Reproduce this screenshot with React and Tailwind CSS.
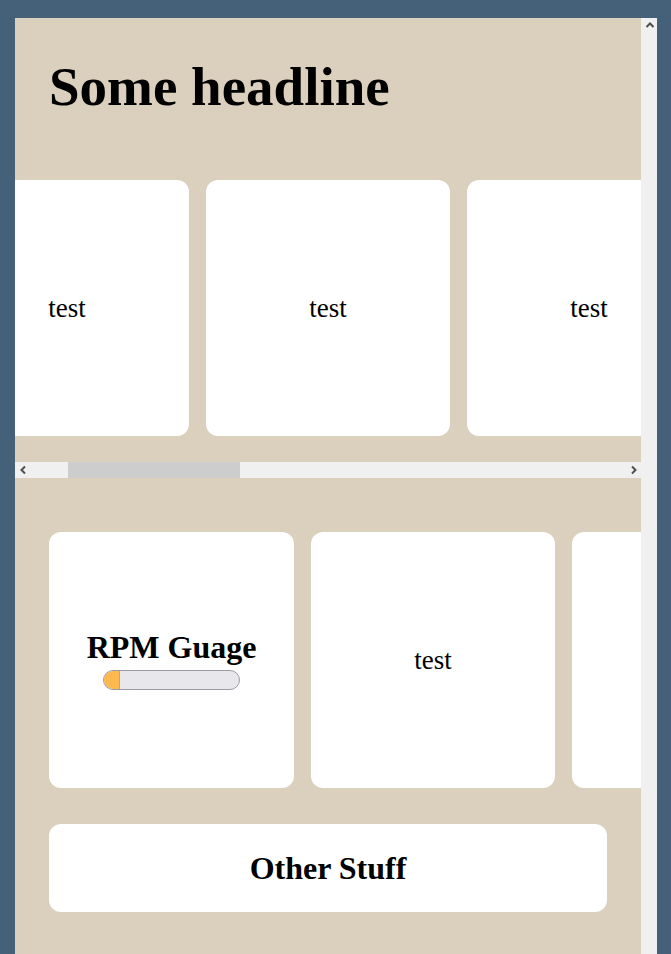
import { useEffect, useRef } from "react";

const serif = "font-['Liberation_Serif','Times_New_Roman',serif]";

const Card = ({ children, wide }) => (
  <div
    className={`${wide ? "w-[245px]" : "w-[244px]"} h-[256px] shrink-0 rounded-xl bg-white flex flex-col items-center justify-center`}
  >
    {children}
  </div>
);

const Gauge = ({ value }) => (
  <div className="w-[137px] h-[20px] rounded-full border border-[#9b9ba5] bg-[#e8e7ec] overflow-hidden">
    <div
      className="h-full bg-[#fdb94d] border-r border-[#e2a23f]"
      style={{ width: `${value}%` }}
    />
  </div>
);

// little chevrons for the drawn scrollbar buttons
const Chevron = ({ dir }) => {
  const points = {
    left: "6,1.5 2.5,5 6,8.5",
    right: "3,1.5 6.5,5 3,8.5",
    up: "1.5,6 5,2.5 8.5,6",
  }[dir];
  return (
    <svg width="9" height="10" viewBox="0 0 9 10">
      <polyline
        points={points}
        fill="none"
        stroke="#4f4f4f"
        strokeWidth="2"
        strokeLinecap="butt"
        strokeLinejoin="miter"
      />
    </svg>
  );
};

const HScrollbar = () => (
  <div className="h-[16px] bg-[#f0f0f0] flex">
    <div className="w-[16px] flex items-center justify-center">
      <Chevron dir="left" />
    </div>
    <div className="flex-1 flex">
      <div className="ml-[37px] w-[172px] bg-[#cdcdcd]" />
    </div>
    <div className="w-[16px] flex items-center justify-center">
      <Chevron dir="right" />
    </div>
  </div>
);

export default function App() {
  const scroller = useRef(null);

  // the top row is shown part-way scrolled
  useEffect(() => {
    if (scroller.current) scroller.current.scrollLeft = 134;
  }, []);

  const topCards = Array.from({ length: 8 }, (_, i) => i);

  return (
    <div className={`h-screen overflow-hidden bg-[#446179] pl-[15px] pt-[18px] ${serif} text-black`}>
      <div className="w-[642px] h-[1000px] bg-[#dbd0bd] flex">
        <div className="w-[626px] overflow-hidden">
          {/* Headline */}
          <div className="pt-[38px] pl-[34px]">
            <h1 className="text-[55px] leading-[61px] font-bold">Some headline</h1>
          </div>

          {/* Scrolling row */}
          <div className="mt-[36px]">
            <div
              ref={scroller}
              className="overflow-x-auto overflow-y-hidden [scrollbar-width:none]"
            >
              <div className="flex gap-[17px] w-max pl-[64px] pr-[26px] pt-[27px] pb-[26px]">
                {topCards.map((i) => (
                  <Card key={i}>
                    <span className="text-[27px] leading-[31px]">test</span>
                  </Card>
                ))}
              </div>
            </div>
            <HScrollbar />
          </div>

          {/* Second row */}
          <div className="mt-[54px] flex gap-[17px] px-[34px] w-max">
            <Card wide>
              <h2 className="text-[32px] leading-[37px] font-bold">RPM Guage</h2>
              <div className="mt-[4px] mb-[2px]">
                <Gauge value={12} />
              </div>
            </Card>
            <Card>
              <span className="text-[27px] leading-[31px]">test</span>
            </Card>
            <Card>
              <span className="text-[27px] leading-[31px]">test</span>
            </Card>
          </div>

          {/* Other stuff */}
          <div className="mt-[36px] mx-[34px] h-[88px] rounded-xl bg-white flex items-center justify-center">
            <h2 className="text-[32px] leading-[37px] font-bold">Other Stuff</h2>
          </div>
        </div>

        {/* vertical scrollbar (no thumb, nothing to scroll) */}
        <div className="w-[16px] bg-[#f0f0f0] flex flex-col">
          <div className="h-[16px] flex items-center justify-center">
            <Chevron dir="up" />
          </div>
        </div>
      </div>
    </div>
  );
}
